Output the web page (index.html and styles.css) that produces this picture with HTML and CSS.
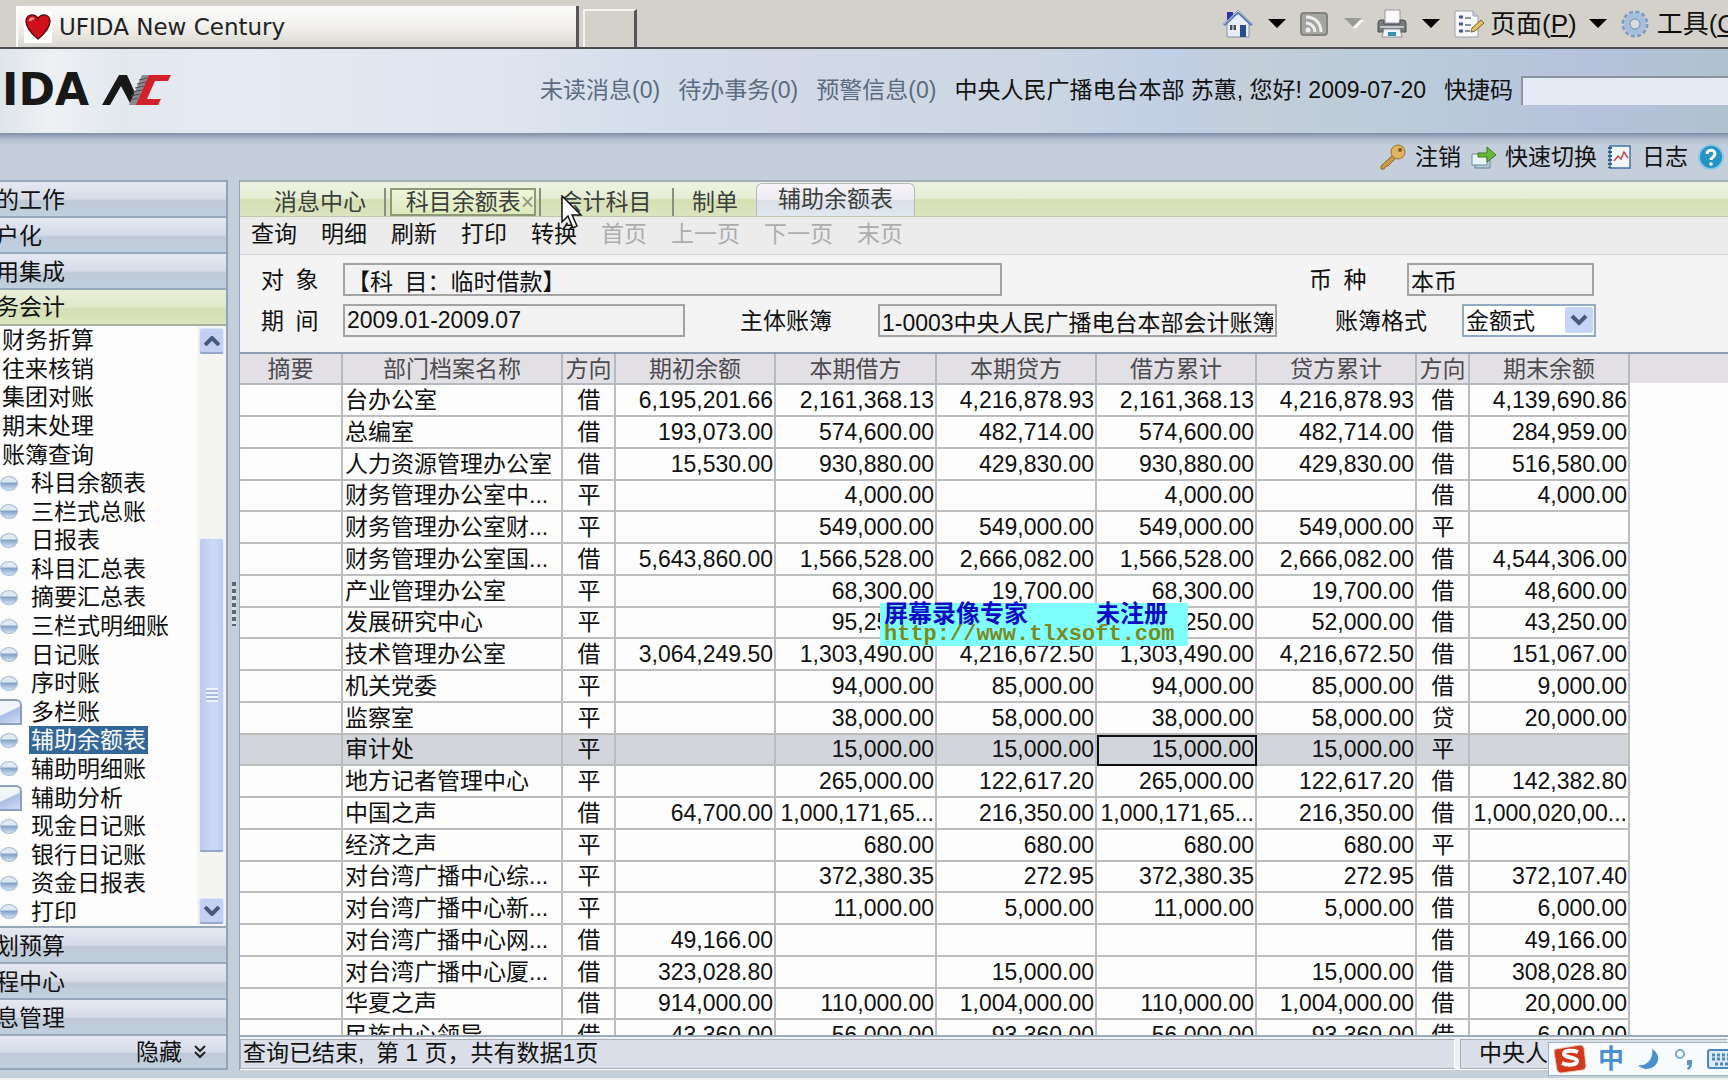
FILE: index.html
```html
<!DOCTYPE html>
<html lang="zh-CN">
<head>
<meta charset="utf-8">
<title>UFIDA New Century</title>
<link rel="stylesheet" href="styles.css">
</head>
<body>
<header class="browser">
  <div class="browser-tab">
    <svg class="favicon" width="28" height="32" viewBox="0 0 28 32"><rect width="28" height="32" fill="#fff"/><path d="M14 28C8 23 2 17 2 10c0-4 3-6 6-6 3 0 5 1 6 4 1-3 3-4 6-4 3 0 6 2 6 6 0 7-6 13-12 18z" fill="#d0101c" stroke="#5c0a10" stroke-width="1.5"/><path d="M6 10c0-2 2-3 4-2" stroke="#ff9a9a" stroke-width="2.500" fill="none"/></svg>
    <span>UFIDA New Century</span>
  </div>
  <div class="browser-newtab"></div>
  <nav class="browser-tools">
    <button class="tool" aria-label="主页"><svg width="32" height="30" viewBox="0 0 32 30"><path d="M5 3h6v8H5z" fill="#2a35a8"/><path d="M5 14L16 4l11 10v14H5z" fill="#e9edf7" stroke="#7c8db4"/><path d="M2 16L16 3l14 13" fill="none" stroke="#5b79b5" stroke-width="3"/><path d="M2 15L16 2l14 13" fill="none" stroke="#b9cdec" stroke-width="1"/><path d="M18 16h6v12h-6z" fill="#254f95"/><path d="M8 16h6v5H8z" fill="#444d5e"/><path d="M11 16v5" stroke="#fff"/></svg></button>
    <button class="tool arrow" aria-label="主页菜单"><svg width="18" height="9" viewBox="0 0 18 9"><path d="M0 0h18L9 9z"/></svg></button>
    <button class="tool rss" aria-label="订阅"><svg width="28" height="24" viewBox="0 0 28 24"><rect x="1" y="1" width="26" height="22" rx="3" fill="#a5a5a0" stroke="#84847f" stroke-width="2"/><circle cx="8" cy="18" r="2.500" fill="#eee"/><path d="M6 11c5 0 9 4 9 9M6 5c9 0 15 6 15 15" fill="none" stroke="#eee" stroke-width="3"/></svg></button>
    <button class="tool arrow" aria-label="订阅菜单"><svg width="20" height="11" viewBox="0 0 20 11"><path d="M2 2h18l-9 9z" fill="#fff"/><path d="M0 0h18L9 9z" fill="#9a9a96"/></svg></button>
    <button class="tool" aria-label="打印页面"><svg width="32" height="30" viewBox="0 0 32 30"><path d="M9 1h15v13H9z" fill="#fafafa" stroke="#999"/><path d="M2 14q0-3 3-3h3v4h16v-4h3q3 0 3 3v9H2z" fill="#77797d" stroke="#4c4e52"/><path d="M4 18h24" stroke="#c4c6ca" stroke-width="2"/><path d="M8 20h16l2 8H6z" fill="#eef4fa" stroke="#8b939c"/><path d="M12 23h8v4h-8z" fill="#3a92b8"/></svg></button>
    <button class="tool arrow" aria-label="打印菜单"><svg width="18" height="9" viewBox="0 0 18 9"><path d="M0 0h18L9 9z"/></svg></button>
    <button class="tool page"><svg width="32" height="28" viewBox="0 0 32 28"><path d="M1 1h18l5 5v21H1z" fill="#f6f8fb" stroke="#9aa0ab"/><path d="M19 1v5h5" fill="#c9d0dd" stroke="#9aa0ab"/><path d="M5 7h4M5 14h4M5 21h4" stroke="#3e5aa6" stroke-width="3"/><path d="M11 8h6M11 15h6M11 21h5" stroke="#8a93a6" stroke-width="2"/><path d="M17 22l1-4 9-8 3 3-9 8z" fill="#e6c25c" stroke="#7a6330"/></svg><span>页面(<u>P</u>)</span></button>
    <button class="tool arrow" aria-label="页面菜单"><svg width="18" height="9" viewBox="0 0 18 9"><path d="M0 0h18L9 9z"/></svg></button>
    <button class="tool gear"><svg width="32" height="28" viewBox="0 0 32 28"><circle cx="16" cy="14" r="12" fill="none" stroke="#7f9cc0" stroke-width="3" stroke-dasharray="4 2.280"/><circle cx="16" cy="14" r="8" fill="none" stroke="#a5bedc" stroke-width="6"/><circle cx="16" cy="14" r="5" fill="#d9dde0" stroke="#6f8cb2"/></svg><span>工具(<u>O</u>)</span></button>
  </nav>
</header>

<header class="banner">
  <div class="logo"><span class="logo-word">FIDA</span>
    <svg width="72" height="32" viewBox="0 0 72 32"><path d="M1 31L18 1h8l9 20-5 10L20 12 9 31z" fill="#181818"/><path d="M41 1h9L37 31h-9z" fill="#8c8c90"/><path d="M38 6l8-2M36 10l9-2M34 14l9-2M32 18l9-2M30 22l9-2M29 26l8-2" stroke="#4b4b50"/><path d="M48 1h22l-3 6H54l-8 18h14l-3 6H35z" fill="#d2202c"/></svg>
  </div>
  <nav class="messages">
    <a href="#">未读消息(0)</a><a href="#">待办事务(0)</a><a href="#">预警信息(0)</a>
    <span>中央人民广播电台本部 苏蕙, 您好! 2009-07-20</span>
  </nav>
  <div class="shortcut"><label for="quick">快捷码</label><input id="quick" type="text"></div>
</header>

<nav class="links">
  <a class="w8" href="#"><svg width="28" height="26" viewBox="0 0 28 26"><path d="M2 22L14 11l3 3-8 8H7l-2 3H2z" fill="#c99a48" stroke="#8c6423"/><circle cx="19" cy="8" r="7" fill="#dfb45f" stroke="#98702c"/><circle cx="21" cy="6" r="2" fill="#7e5b20"/></svg>注销</a>
  <a class="w8" href="#"><svg width="26" height="24" viewBox="0 0 26 24"><path d="M4 13h15v10H4z" fill="#b8c8d4" stroke="#6a8496"/><path d="M1 9h15v11H1z" fill="#e7f3f6" stroke="#6c8fa0"/><path d="M7 8h9V2l9 8-9 7v-5H7z" fill="#69b83b" stroke="#38791c"/></svg>快速切换</a>
  <a class="w11" href="#"><svg width="24" height="24" viewBox="0 0 24 24"><path d="M3 1h20v22H3z" fill="#f3f7fc" stroke="#4272a5" stroke-width="1.500"/><path d="M3 2v21" stroke="#30608f" stroke-width="4" stroke-dasharray="2 2"/><path d="M7 16l4-5 3 3 3-7 4 6" fill="none" stroke="#c04646" stroke-width="1.500"/></svg>日志</a>
  <a href="#" aria-label="帮助"><svg width="26" height="26" viewBox="0 0 26 26"><circle cx="13" cy="13" r="12" fill="#2493c4" stroke="#8bc8e2" stroke-width="2"/><path d="M9 10c0-5 8-5 8 0 0 3-4 3-4 6" fill="none" stroke="#fff" stroke-width="3"/><circle cx="13" cy="20" r="1.800" fill="#fff"/></svg></a>
</nav>

<div class="workspace">
  <aside class="sidebar">
    <button class="group">的工作</button>
    <button class="group">户化</button>
    <button class="group">用集成</button>
    <button class="group open">务会计</button>
    <div class="tree-wrap">
      <ul class="tree">
        <li class="top"><a href="#">财务折算</a></li>
        <li class="top"><a href="#">往来核销</a></li>
        <li class="top"><a href="#">集团对账</a></li>
        <li class="top"><a href="#">期末处理</a></li>
        <li class="top"><a href="#">账簿查询</a></li>
        <li><a href="#">科目余额表</a></li>
        <li><a href="#">三栏式总账</a></li>
        <li><a href="#">日报表</a></li>
        <li><a href="#">科目汇总表</a></li>
        <li><a href="#">摘要汇总表</a></li>
        <li><a href="#">三栏式明细账</a></li>
        <li><a href="#">日记账</a></li>
        <li><a href="#">序时账</a></li>
        <li class="folder"><a href="#">多栏账</a></li>
        <li class="selected"><a href="#">辅助余额表</a></li>
        <li><a href="#">辅助明细账</a></li>
        <li class="folder"><a href="#">辅助分析</a></li>
        <li><a href="#">现金日记账</a></li>
        <li><a href="#">银行日记账</a></li>
        <li><a href="#">资金日报表</a></li>
        <li><a href="#">打印</a></li>
      </ul>
      <div class="scrollbar">
        <button class="scroll-btn" aria-label="向上"><svg width="16" height="10" viewBox="0 0 16 10"><path d="M1 9l7-7 7 7" fill="none" stroke="#48597c" stroke-width="4"/></svg></button>
        <div class="track"><div class="thumb"><i></i></div></div>
        <button class="scroll-btn" aria-label="向下"><svg width="16" height="10" viewBox="0 0 16 10"><path d="M1 1l7 7 7-7" fill="none" stroke="#48597c" stroke-width="4"/></svg></button>
      </div>
    </div>
    <button class="group">划预算</button>
    <button class="group">程中心</button>
    <button class="group">息管理</button>
    <button class="group hide">隐藏<svg width="12" height="14" viewBox="0 0 12 14"><path d="M1 1l5 5 5-5M1 7l5 5 5-5" fill="none" stroke="#222" stroke-width="2"/></svg></button>
  </aside>
  <div class="splitter"><i></i></div>

  <main class="content">
    <div class="tabs">
      <button class="tab first">消息中心</button>
      <button class="tab hover">科目余额表<span>×</span></button>
      <button class="tab third">会计科目</button>
      <button class="tab fourth">制单</button>
      <button class="tab active">辅助余额表</button>
    </div>
    <div class="toolbar">
      <button>查询</button><button>明细</button><button>刷新</button><button>打印</button><button>转换</button>
      <button disabled>首页</button><button disabled>上一页</button><button disabled>下一页</button><button disabled>末页</button>
    </div>
    <form class="filters">
      <label for="obj">对&ensp;象</label><input id="obj" class="wide" value="【科&ensp;目：临时借款】" readonly>
      <label for="cur">币&ensp;种</label><input id="cur" class="currency" value="本币" readonly>
      <label for="per">期&ensp;间</label><input id="per" class="period" value="2009.01-2009.07" readonly>
      <label for="book">主体账簿</label><input id="book" class="book" value="1-0003中央人民广播电台本部会计账簿" readonly>
      <label for="fmt">账簿格式</label>
      <span class="select"><select id="fmt"><option>金额式</option></select><svg width="28" height="26" viewBox="0 0 28 26"><rect width="28" height="26" rx="3" fill="#c6d4f5"/><path d="M7 9l7 7 7-7" fill="none" stroke="#48597c" stroke-width="4"/></svg></span>
    </form>
    <div class="grid">
      <table>
        <colgroup><col class="c-note"><col class="c-name"><col class="c-dir"><col class="c-num"><col class="c-num"><col class="c-num"><col class="c-num"><col class="c-num"><col class="c-dir"><col class="c-num"><col></colgroup>
        <thead><tr><th>摘要</th><th>部门档案名称</th><th>方向</th><th>期初余额</th><th>本期借方</th><th>本期贷方</th><th>借方累计</th><th>贷方累计</th><th>方向</th><th>期末余额</th><th class="rest"></th></tr></thead>
        <tbody>
          <tr><td></td><td>台办公室</td><td>借</td><td>6,195,201.66</td><td>2,161,368.13</td><td>4,216,878.93</td><td>2,161,368.13</td><td>4,216,878.93</td><td>借</td><td>4,139,690.86</td></tr>
          <tr><td></td><td>总编室</td><td>借</td><td>193,073.00</td><td>574,600.00</td><td>482,714.00</td><td>574,600.00</td><td>482,714.00</td><td>借</td><td>284,959.00</td></tr>
          <tr><td></td><td>人力资源管理办公室</td><td>借</td><td>15,530.00</td><td>930,880.00</td><td>429,830.00</td><td>930,880.00</td><td>429,830.00</td><td>借</td><td>516,580.00</td></tr>
          <tr><td></td><td>财务管理办公室中...</td><td>平</td><td></td><td>4,000.00</td><td></td><td>4,000.00</td><td></td><td>借</td><td>4,000.00</td></tr>
          <tr><td></td><td>财务管理办公室财...</td><td>平</td><td></td><td>549,000.00</td><td>549,000.00</td><td>549,000.00</td><td>549,000.00</td><td>平</td><td></td></tr>
          <tr><td></td><td>财务管理办公室国...</td><td>借</td><td>5,643,860.00</td><td>1,566,528.00</td><td>2,666,082.00</td><td>1,566,528.00</td><td>2,666,082.00</td><td>借</td><td>4,544,306.00</td></tr>
          <tr><td></td><td>产业管理办公室</td><td>平</td><td></td><td>68,300.00</td><td>19,700.00</td><td>68,300.00</td><td>19,700.00</td><td>借</td><td>48,600.00</td></tr>
          <tr><td></td><td>发展研究中心</td><td>平</td><td></td><td>95,250.00</td><td>52,000.00</td><td>95,250.00</td><td>52,000.00</td><td>借</td><td>43,250.00</td></tr>
          <tr><td></td><td>技术管理办公室</td><td>借</td><td>3,064,249.50</td><td>1,303,490.00</td><td>4,216,672.50</td><td>1,303,490.00</td><td>4,216,672.50</td><td>借</td><td>151,067.00</td></tr>
          <tr><td></td><td>机关党委</td><td>平</td><td></td><td>94,000.00</td><td>85,000.00</td><td>94,000.00</td><td>85,000.00</td><td>借</td><td>9,000.00</td></tr>
          <tr><td></td><td>监察室</td><td>平</td><td></td><td>38,000.00</td><td>58,000.00</td><td>38,000.00</td><td>58,000.00</td><td>贷</td><td>20,000.00</td></tr>
          <tr class="current"><td></td><td>审计处</td><td>平</td><td></td><td>15,000.00</td><td>15,000.00</td><td class="focus">15,000.00</td><td>15,000.00</td><td>平</td><td></td></tr>
          <tr><td></td><td>地方记者管理中心</td><td>平</td><td></td><td>265,000.00</td><td>122,617.20</td><td>265,000.00</td><td>122,617.20</td><td>借</td><td>142,382.80</td></tr>
          <tr><td></td><td>中国之声</td><td>借</td><td>64,700.00</td><td>1,000,171,65...</td><td>216,350.00</td><td>1,000,171,65...</td><td>216,350.00</td><td>借</td><td>1,000,020,00...</td></tr>
          <tr><td></td><td>经济之声</td><td>平</td><td></td><td>680.00</td><td>680.00</td><td>680.00</td><td>680.00</td><td>平</td><td></td></tr>
          <tr><td></td><td>对台湾广播中心综...</td><td>平</td><td></td><td>372,380.35</td><td>272.95</td><td>372,380.35</td><td>272.95</td><td>借</td><td>372,107.40</td></tr>
          <tr><td></td><td>对台湾广播中心新...</td><td>平</td><td></td><td>11,000.00</td><td>5,000.00</td><td>11,000.00</td><td>5,000.00</td><td>借</td><td>6,000.00</td></tr>
          <tr><td></td><td>对台湾广播中心网...</td><td>借</td><td>49,166.00</td><td></td><td></td><td></td><td></td><td>借</td><td>49,166.00</td></tr>
          <tr><td></td><td>对台湾广播中心厦...</td><td>借</td><td>323,028.80</td><td></td><td>15,000.00</td><td></td><td>15,000.00</td><td>借</td><td>308,028.80</td></tr>
          <tr><td></td><td>华夏之声</td><td>借</td><td>914,000.00</td><td>110,000.00</td><td>1,004,000.00</td><td>110,000.00</td><td>1,004,000.00</td><td>借</td><td>20,000.00</td></tr>
          <tr><td></td><td>民族中心领导</td><td>借</td><td>43,360.00</td><td>56,000.00</td><td>93,360.00</td><td>56,000.00</td><td>93,360.00</td><td>借</td><td>6,000.00</td></tr>
        </tbody>
      </table>
    </div>
    <footer class="status"><span class="status-main">查询已结束,&ensp;第 1 页，共有数据1页</span><span class="status-unit">中央人</span></footer>
  </main>
</div>

<div class="watermark"><p class="wm-name"><span>屏幕录像专家</span><span>未注册</span></p><p class="wm-url">http://www.tlxsoft.com</p></div>

<div class="ime">
  <svg width="34" height="30" viewBox="0 0 34 30"><path d="M3 5l24-4q3 0 4 3l2 18q0 3-3 4L8 29q-3 0-4-3L1 8q0-3 2-3z" fill="#cf3a1d" stroke="#efc7ba"/><path d="M25 8c-5-2-14-2-14 2s13 3 13 7-9 5-15 2" fill="none" stroke="#fff" stroke-width="4"/></svg>
  <b>中</b>
  <svg width="24" height="22" viewBox="0 0 24 22"><path d="M15 1c5 3 8 8 5 14-4 7-14 8-19 2 8 2 16-6 14-16z" fill="#4c8fcf"/></svg>
  <svg width="20" height="22" viewBox="0 0 20 22"><circle cx="6" cy="6" r="4" fill="none" stroke="#74a7d4" stroke-width="2"/><path d="M13 12h5v4q0 4-4 6l-1-2q2-1 2-3h-2z" fill="#5a93c6"/></svg>
  <svg width="30" height="20" viewBox="0 0 30 20"><rect x="1" y="1" width="32" height="18" rx="2" fill="#dceaf6" stroke="#4c88bd" stroke-width="2"/><path d="M5 6h25M5 10h25M8 15h18" stroke="#4c88bd" stroke-width="3" stroke-dasharray="3 2"/></svg>
</div>

<svg class="cursor" width="22" height="36" viewBox="0 0 22 36"><path d="M1 1v26l6-6 5 12 4-2-5-11h9z" fill="#fff" stroke="#111" stroke-width="1.500"/></svg>
</body>
</html>
```

FILE: styles.css
```css
* { box-sizing: border-box; }

body {
  margin: 0;
  height: 100vh;
  display: flex;
  flex-direction: column;
  overflow: hidden;
  position: relative;
  background: #c5cedb;
  color: #111;
  font: 23px/28px "Liberation Sans", "Noto Sans CJK SC", sans-serif;
}

button, input, select { font: inherit; color: inherit; border-radius: 0; }
button { border: 0; padding: 0; background: none; }
a { color: inherit; text-decoration: none; }
svg { flex: none; display: block; }

/* browser chrome */
.browser {
  flex: none;
  display: flex;
  height: 49px;
  background: #d3d1ca;
  border-bottom: 2px solid #4a4c50;
}
.browser-tab {
  width: 563px;
  margin: 6px 0 0 16px;
  padding-left: 6px;
  display: flex;
  align-items: center;
  gap: 7px;
  background: linear-gradient(#fcfcfc, #f1f0ed 50%, #d9d7d0);
  border-left: 2px solid #fff;
  border-right: 3px solid #55565a;
  font-family: "DejaVu Sans", sans-serif;
  color: #222;
}
.browser-newtab {
  width: 54px;
  margin: 9px 0 0 4px;
  border: 2px solid #f4f3ef;
  border-right: 3px solid #55565a;
  border-bottom: 0;
}
.browser-tools {
  margin-left: auto;
  display: flex;
  align-items: center;
  width: 506px;
  overflow: hidden;
  white-space: nowrap;
  font-size: 26px;
}
.tool { display: flex; flex: none; align-items: center; gap: 4px; }
.arrow { width: 18px; margin: 0 14px; }
.rss + .arrow { margin-left: 16px; }
.page + .arrow { margin: 0 12px; }
.gear { gap: 6px; }

/* product banner */
.banner {
  flex: none;
  display: flex;
  align-items: center;
  height: 84px;
  padding-bottom: 2px;
  background: linear-gradient(90deg, #dfe5ea, #eef1f4 3%, #e2e8ee 7%, #e6eaf4 13%, #dfe4f0 29%, #d3deea 38%, #d3d9e7 45%, #cbd6e2 60%, #c1cfe5 68%, #c3ced9 72%, #b9cbda 83%, #b6c2dc 92%, #afc2ce);
}
.logo { display: flex; align-items: center; justify-content: flex-end; gap: 12px; width: 173px; overflow: hidden; }
.logo-word { font: bold 44px/50px "DejaVu Sans", sans-serif; color: #181818; }
.messages { margin-left: auto; display: flex; gap: 18px; white-space: nowrap; }
.messages a { color: #5b6b80; }
.shortcut { display: flex; align-items: center; gap: 8px; margin-left: 18px; }
.shortcut input {
  width: 207px;
  height: 29px;
  background: #e6eaf5;
  border: 2px solid #8b929b;
  border-width: 2px 0 0 2px;
}

.links {
  flex: none;
  display: flex;
  align-items: center;
  justify-content: flex-end;
  gap: 10px;
  height: 47px;
  padding-right: 4px;
  background: linear-gradient(#7f8ea6, #b0bccd 6px, #c5cedb 12px);
}
.links a { display: flex; align-items: center; }
.w8 { gap: 8px; }
.w11 { gap: 11px; }

.workspace { flex: 1; min-height: 0; display: flex; padding-bottom: 8px; border-bottom: 2px solid #f2f2f2; }

/* navigation */
.sidebar { width: 228px; flex: none; display: flex; flex-direction: column; border-right: 2px solid #93a2b6; }
.group {
  flex: none;
  height: 36px;
  padding-top: 2px;
  text-align: left;
  text-indent: -4px;
  white-space: nowrap;
  border-top: 2px solid #98a8bc;
  background: linear-gradient(#e6e9f3, #d5dbe7 50%, #c1c9d8 55%, #bfd0de);
}
.group.open { padding: 0; background: linear-gradient(#e9f0da, #e0e8c9 50%, #d5dfb5 55%, #dbe5be); }
.group.hide { display: flex; align-items: center; justify-content: flex-end; gap: 12px; padding: 0 20px 0 0; border-bottom: 2px solid #98a8bc; }
.tree-wrap { flex: 1; min-height: 0; display: flex; background: #fdfdfd; border-top: 2px solid #a8b0a0; }
.tree { flex: 1; margin: 0; padding: 0; display: flex; flex-direction: column; list-style: none; }
.tree li { flex: 1; min-height: 0; display: flex; align-items: center; gap: 11px; white-space: nowrap; }
.tree li::before {
  content: "";
  flex: none;
  width: 16px;
  height: 13px;
  border-radius: 50%;
  border: 1px solid #a9bcd4;
  background: linear-gradient(#dfe9f4 35%, #86a3ca 50%, #d3e4f2);
}
.tree li.top::before { content: none; }
.tree li.top { padding-left: 0; }
.tree a { padding: 0 2px; }
.tree li.folder::before {
  width: 20px;
  height: 22px;
  border-radius: 0 6px 0 0;
  border: 2px solid #8c9fc0;
  border-left: 0;
  background: linear-gradient(155deg, #f1f5fc 45%, #a9bde6 50%, #d2def5);
}
.tree li.folder { gap: 7px; }
.selected a { background: #336799; color: #fff; }
.scrollbar { width: 29px; flex: none; display: flex; flex-direction: column; padding: 2px; background: #f4f4f0; }
.scroll-btn {
  height: 26px;
  display: flex;
  align-items: center;
  justify-content: center;
  background: #c3d0f1;
  border: 1px solid #dfe7fa;
  border-bottom: 2px solid #95a6c8;
  border-radius: 3px;
}
.track { flex: 1; padding: 184px 0 46px; display: flex; }
.thumb {
  flex: 1;
  display: flex;
  align-items: center;
  justify-content: center;
  background: linear-gradient(90deg, #bccbee, #cddaf6 60%, #bccbee);
  border: 1px solid #e8eefb;
  border-bottom: 2px solid #93a5cc;
  border-radius: 3px;
}
.thumb i { width: 12px; height: 14px; background: repeating-linear-gradient(#eef3fd 0 2px, #a9bbe3 2px 4px); }
.splitter { width: 11px; flex: none; display: flex; align-items: center; justify-content: center; padding-bottom: 42px; }
.splitter i { width: 4px; height: 44px; background: repeating-linear-gradient(#5c6775 0 4px, #d8dfe8 4px 7px); }

/* document area */
.content { flex: 1; min-width: 0; display: flex; flex-direction: column; border-left: 1px solid #8fa3ba; background: #fdfdfd; }
.tabs {
  flex: none;
  display: flex;
  align-items: center;
  height: 37px;
  padding-top: 6px;
  border-top: 2px solid #a3afb8;
  border-bottom: 1px solid #bfc6b4;
  background: linear-gradient(#edf3e0, #e6edd5 48%, #d6dfb3 52%, #dbe4bf);
  color: #3b403c;
}
.tab { height: 28px; white-space: nowrap; }
.tab.first { width: 146px; padding-left: 34px; text-align: left; border-right: 2px solid #8a9080; }
.tab.hover { width: 146px; margin-left: 4px; padding-left: 14px; display: flex; align-items: center; justify-content: center; border: 2px solid #8e9a78; background: linear-gradient(#eff5d9, #dfe8bb); }
.tab.hover span { color: #929788; }
.tab.third { width: 135px; margin-left: 3px; padding-right: 2px; border: 2px solid #8a9080; border-width: 0 2px; }
.tab.fourth { width: 84px; padding-right: 2px; }
.tab.active {
  width: 159px;
  height: 33px;
  margin-left: -2px;
  padding-bottom: 3px;
  align-self: flex-end;
  border: 1px solid #b3bac0;
  border-bottom: 0;
  border-radius: 6px 6px 0 0;
  background: linear-gradient(#f7f4f9, #ececf2 48%, #dcdfe8 52%, #dfe8ef);
}
.toolbar {
  flex: none;
  display: flex;
  align-items: center;
  gap: 24px;
  height: 38px;
  padding: 0 0 3px 11px;
  background: #ececec;
  border-bottom: 1px solid #d4d6d6;
}
.toolbar button:disabled { color: #adadad; }
.filters {
  flex: none;
  display: grid;
  grid-template-columns: 82px 342px 193px 399px 185px 187px;
  grid-template-rows: 33px 33px;
  row-gap: 8px;
  align-items: center;
  height: 97px;
  padding: 8px 0 0 21px;
  background: #f4f4f4;
  white-space: nowrap;
}
.filters input, .filters select {
  height: 33px;
  padding: 0 2px;
  border: 2px solid #a3a3a3;
  background: #f2f2f2;
}
.filters .wide { grid-column: 2 / 4; width: 659px; }
.filters label[for="cur"] { grid-column: 5; padding-left: 32px; }
.filters label[for="fmt"] { padding-left: 58px; }
.filters label[for="book"] { padding-left: 55px; }
.period, .currency, .book { width: 100%; }
.filters .currency { margin-left: -55px; width: 187px; }
.select { position: relative; width: 134px; }
.filters select { width: 134px; background: #fff; border-color: #92aac4; appearance: none; }
.select svg { position: absolute; right: 3px; top: 3px; pointer-events: none; }

.grid { flex: 1; min-height: 0; overflow: hidden; border-top: 2px solid #8c9bad; }
table { width: 100%; table-layout: fixed; border-collapse: separate; border-spacing: 0; }
.c-note { width: 103px; }
.c-name { width: 220px; }
.c-dir { width: 53px; }
.c-num { width: 160px; }
.c-dir + .c-num + .c-num { width: 161px; }
th { height: 31px; padding: 0; font-weight: normal; line-height: 26px; color: #4c4c50; background: #e3e0e5; border-right: 2px solid #b3bac0; border-bottom: 2px solid #b3bac0; }
th.rest { border-right: 0; border-bottom-color: #fdfdfd; }
td { height: 32px; padding: 0 1px 1px 2px; text-align: right; white-space: nowrap; border-right: 2px solid #bcbebe; border-bottom: 2px solid #bcbebe; }
tr:nth-child(4n) td { height: 31px; }
td:nth-child(2) { text-align: left; }
td:nth-child(3), td:nth-child(9) { text-align: center; }
.current td { background: #d2d5d9; }
.current .focus { outline: 2px solid #111; outline-offset: -2px; }

.status { flex: none; display: flex; gap: 5px; height: 35px; padding-top: 2px; background: #eef0f4; border-top: 2px solid #9aaaba; border-bottom: 1px solid #fff; white-space: nowrap; }
.status span { background: #dadfe9; border: 1px solid #a9b0bc; border-right-color: #fff; line-height: 26px; }
.status-main { flex: 1; padding-left: 2px; }
.status-unit { width: 268px; padding-left: 18px; }

/* overlays */
.watermark { position: absolute; left: 880px; top: 603px; width: 308px; height: 43px; padding-left: 4px; background: #80ffff; font-weight: bold; line-height: 21px; }
.watermark p { margin: 0; }
.wm-name { display: flex; gap: 68px; font-size: 24px; color: #0a0ac4; }
.wm-url { font-family: "Liberation Mono", monospace; font-size: 22px; color: #7c8a1c; }
.ime { position: absolute; right: 0; bottom: 4px; width: 180px; height: 34px; padding-left: 4px; display: flex; align-items: center; gap: 13px; overflow: hidden; background: #f8fbfd; border: 1px solid #9fb2c4; border-right: 0; }
.ime b { width: 26px; margin-left: -2px; font-size: 26px; color: #4c8fcf; }
.cursor { position: absolute; left: 561px; top: 195px; }
```
